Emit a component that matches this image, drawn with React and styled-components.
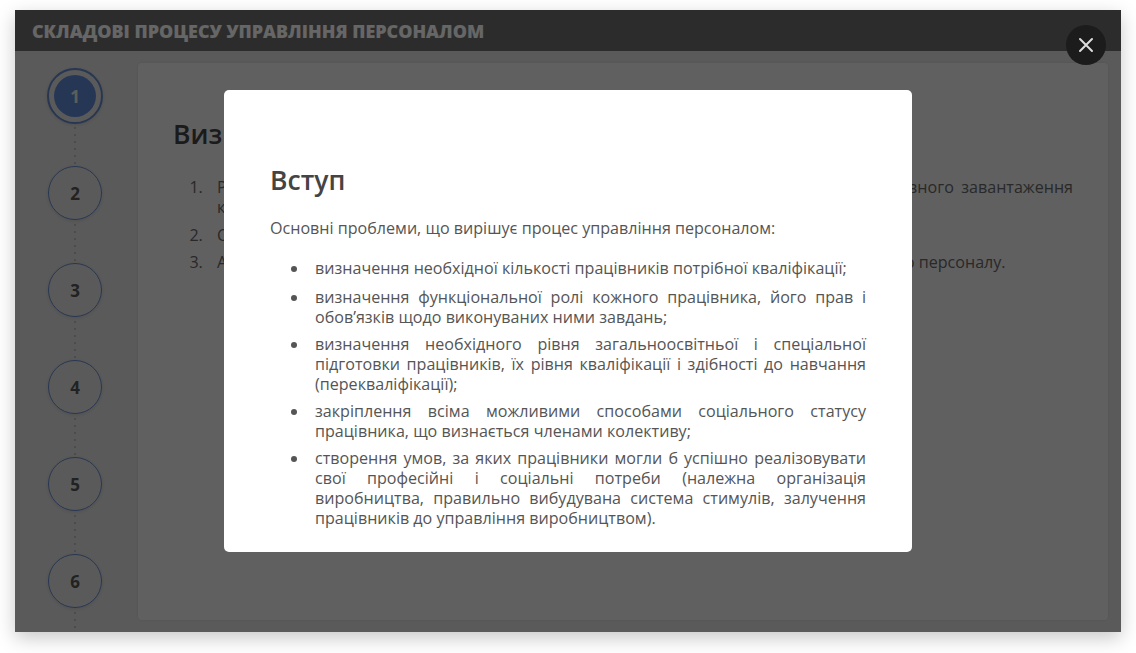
import React from "react";
import styled, { createGlobalStyle } from "styled-components";

const Global = createGlobalStyle`
  html, body { margin: 0; padding: 0; background: #fff; }
  body { font-family: "Open Sans", "Noto Sans", sans-serif; color: #444; }
`;
const Frame = styled.div`
  position: relative; width: 1106px; height: 622px; margin: 10px 15px 21px;
  background: #e2e2e2; box-shadow: 0 6px 18px rgba(0,0,0,.22);
  display: flex; flex-direction: column; overflow: hidden;
`;
const Header = styled.header`
  flex: none; height: 41px; padding-left: 17px; display: flex; align-items: center;
  background: #6f6f6f; color: #fff; font-size: 17.9px; font-weight: 800; text-transform: uppercase;
`;
const Main = styled.main`flex: 1; min-height: 0; display: flex;`;
const Rail = styled.nav`
  flex: none; width: 123px; padding-top: 17px; box-sizing: border-box;
  display: flex; flex-direction: column; align-items: center; padding-right: 3px;
`;
const StepSlot = styled.div`
  flex: none; height: 97px; width: 100%; position: relative;
  display: flex; justify-content: center;
  &::after {
    content: ""; position: absolute; left: 50%; top: 59px; height: 37px; width: 2px; margin-left: -1.5px;
    background: repeating-linear-gradient(to bottom, #bdbdbd 0 2px, transparent 2px 7px);
  }
`;
const Step = styled.div`
  box-sizing: border-box; width: 54px; height: 54px; border-radius: 50%; margin-top: 1px;
  border: 1.5px solid #6389cc; background: transparent;
  display: flex; align-items: center; justify-content: center;
  font-size: 17px; font-weight: 700; color: #555; box-shadow: 0 1px 4px rgba(0,0,0,.12);
  ${p => p.$active && `
    width: 56px; height: 56px; margin-top: 0; border-width: 2.5px;
    background: #5f8ad6; background-clip: content-box; padding: 5px; color: #e8e8e8;
  `}
`;
const Card = styled.section`
  flex: 1; margin: 12px 13px 12px 0; padding: 53px 35px 0; border-radius: 4px; background: #f1f1f1;
  box-shadow: 0 0 3px rgba(0,0,0,.1); min-width: 0;
`;
const CardTitle = styled.h2`margin: 0 0 25px; font-size: 26.5px; line-height: 36px; font-weight: 600; color: #444;`;
const OList = styled.ol`
  margin: 0; padding: 0 0 0 34px; font-size: 16.1px; line-height: 20px; text-align: justify; color: #666;
  li { margin-bottom: 7.5px; padding-left: 10px; }
`;
const Overlay = styled.div`
  position: absolute; inset: 0; background: rgba(0,0,0,.6);
  display: flex; align-items: center; justify-content: center;
`;
const Modal = styled.div`
  box-sizing: border-box; width: 688px; height: 462px; padding: 72px 46px 0; border-radius: 5px; background: #fff;
`;
const ModalTitle = styled.h2`margin: 0 0 20px; font-size: 26.5px; line-height: 36px; font-weight: 600; color: #444;`;
const Intro = styled.p`margin: 0 0 20px; font-size: 16.1px; line-height: 20px; color: #555;`;
const BulletList = styled.ul`
  margin: 0; padding: 0 0 0 39px; font-size: 16.1px; line-height: 20px; color: #555; text-align: justify;
  li { margin-bottom: 7.25px; padding-left: 6px; }
  li:first-child { margin-bottom: 8.5px; }
`;
const Close = styled.button`
  position: absolute; left: 1051px; top: 15px; width: 40px; height: 40px; padding: 0; border: 0; border-radius: 50%;
  background: #1c1c1c; color: #ddd; display: flex; align-items: center; justify-content: center;
`;

export default function App() {
  return (
    <>
      <Global />
      <Frame>
        <Header>Складові процесу управління персоналом</Header>
        <Main>
          <Rail>
            {[1, 2, 3, 4, 5, 6].map(n => (
              <StepSlot key={n}><Step $active={n === 1}>{n}</Step></StepSlot>
            ))}
          </Rail>
          <Card>
            <CardTitle>Визначення потреби в персоналі</CardTitle>
            <OList>
              <li>Розрахунок потреби в персоналі на основі даних про обсяги робіт, норм і нормативного завантаження кожного працівника.</li>
              <li>Співставлення потреби з наявним складом працівників.</li>
              <li>Аналіз ринку праці та визначення джерел забезпечення організації потрібною кількістю персоналу.</li>
            </OList>
          </Card>
        </Main>
        <Overlay>
          <Modal>
            <ModalTitle>Вступ</ModalTitle>
            <Intro>Основні проблеми, що вирішує процес управління персоналом:</Intro>
            <BulletList>
              <li>визначення необхідної кількості працівників потрібної кваліфікації;</li>
              <li>визначення функціональної ролі кожного працівника, його прав і обов’язків щодо виконуваних ними завдань;</li>
              <li>визначення необхідного рівня загальноосвітньої і спеціальної підготовки працівників, їх рівня кваліфікації і здібності до навчання (перекваліфікації);</li>
              <li>закріплення всіма можливими способами соціального статусу працівника, що визнається членами колективу;</li>
              <li>створення умов, за яких працівники могли б успішно реалізовувати свої професійні і соціальні потреби (належна організація виробництва, правильно вибудувана система стимулів, залучення працівників до управління виробництвом).</li>
            </BulletList>
          </Modal>
        </Overlay>
        <Close aria-label="Закрити">
          <svg width="16" height="16" viewBox="0 0 16 16" fill="none" stroke="currentColor" strokeWidth="2" strokeLinecap="round"><path d="M2 2l12 12M14 2L2 14" /></svg>
        </Close>
      </Frame>
    </>
  );
}
